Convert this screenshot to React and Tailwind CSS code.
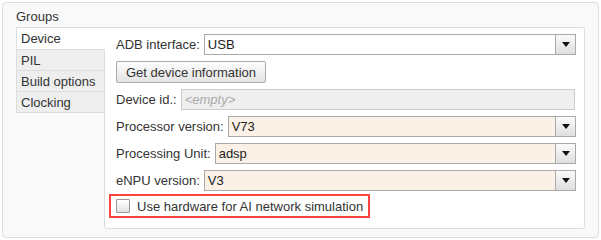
import React from 'react';

const tabs = ['Device', 'PIL', 'Build options', 'Clocking'];

const Arrow = () => (
  <div className="flex h-full w-[20px] shrink-0 items-center justify-center border-l border-[#aaaaaa] bg-gradient-to-b from-[#fbfbfb] to-[#dedede]">
    <svg width="8" height="5" viewBox="0 0 8 5">
      <path d="M0 0 L8 0 L4 5 Z" fill="#111" />
    </svg>
  </div>
);

const Select = ({ value, beige }) => (
  <div
    className={`flex h-[21px] flex-1 items-stretch border border-[#aaaaaa] ${beige ? 'bg-[#fbf1e7]' : 'bg-white'}`}
  >
    <span className="flex flex-1 items-center pl-[3px] text-[#222]">{value}</span>
    <Arrow />
  </div>
);

const Row = ({ label, children }) => (
  <div className="flex h-[21px] items-center gap-[4px]">
    <span className="whitespace-nowrap">{label}</span>
    {children}
  </div>
);

const App = () => {
  return (
    <div
      className="h-[240px] w-[601px] bg-white p-[2px] text-[13px] leading-none text-[#333]"
      style={{ fontFamily: '"Liberation Sans", Arial, sans-serif' }}
    >
      <div className="flex h-[236px] w-[597px] flex-col rounded-[4px] border border-[#dddddd] bg-[#f9f9f9] pl-[13px]">
        <div className="flex h-[24px] items-end pb-[4px]">Groups</div>
        <div className="flex">
          <div className="mt-0 flex w-[88px] flex-col self-start border border-r-0 border-[#dddddd] bg-[#eeeeee]">
            {tabs.map((t, i) => (
              <div
                key={t}
                className={`flex h-[21px] items-center pl-[4px] ${i > 0 ? 'border-t border-[#dddddd]' : ''} ${i === 0 ? 'relative z-10 mr-[-1px] h-[20px] bg-white' : ''}`}
              >
                {t}
              </div>
            ))}
          </div>
          <div className="flex h-[202px] w-[481px] flex-col rounded-r-[3px] rounded-bl-[3px] border border-[#dddddd] bg-white pl-[11px] pr-[8px] pt-[6px]">
            <Row label="ADB interface:">
              <Select value="USB" />
            </Row>
            <div className="mt-[6px] flex">
              <button className="h-[22px] rounded-[2px] border border-[#aaaaaa] bg-gradient-to-b from-[#fdfdfd] to-[#e4e4e4] px-[9px] text-[#333]">
                Get device information
              </button>
            </div>
            <div className="mt-[6px] flex h-[21px] items-center gap-[4px] pr-[1px]">
              <span>Device id.:</span>
              <div className="flex h-[21px] flex-1 items-center border border-[#cccccc] bg-[#efefef] pl-[3px] italic text-[#aaaaaa]">
                &lt;empty&gt;
              </div>
            </div>
            <div className="mt-[6px]">
              <Row label="Processor version:">
                <Select value="V73" beige />
              </Row>
            </div>
            <div className="mt-[6px]">
              <Row label="Processing Unit:">
                <Select value="adsp" beige />
              </Row>
            </div>
            <div className="mt-[6px]">
              <Row label="eNPU version:">
                <Select value="V3" beige />
              </Row>
            </div>
            <div className="ml-[-7px] mt-[3px] flex">
              <label className="flex h-[24px] items-center gap-[7px] border-2 border-[#ff4444] pl-[5px] pr-[5px]">
                <span className="h-[14px] w-[14px] rounded-[1px] border border-[#999999] bg-gradient-to-b from-[#ffffff] to-[#e2e2e2]" />
                <span className="whitespace-nowrap">Use hardware for AI network simulation</span>
              </label>
            </div>
          </div>
        </div>
      </div>
    </div>
  );
};

export default App;
